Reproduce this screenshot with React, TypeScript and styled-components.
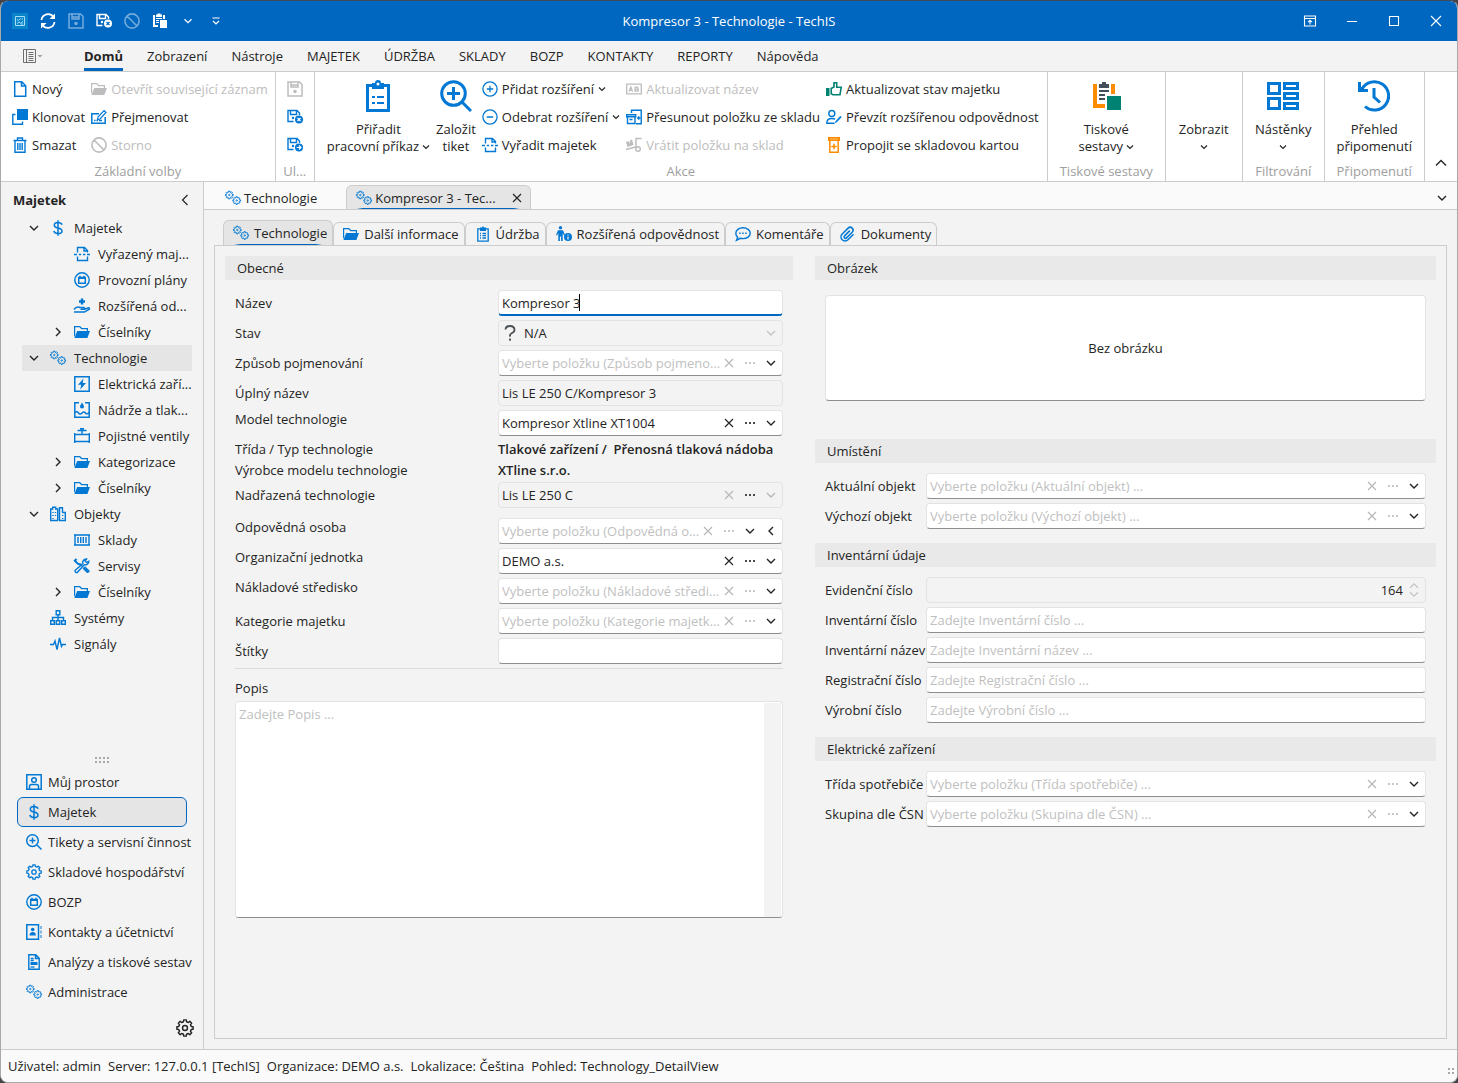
import React, { useId } from "react";
import styled, { createGlobalStyle, css } from "styled-components";

const BLUE = "#0078d4";
const ACCENT = "#0067c0";
const GRAY = "#bdbdbd";
const INK = "#242424";
const GREEN = "#008272";
const ORANGE = "#ff8c00";

const GlobalStyle = createGlobalStyle`
  *, *::before, *::after { box-sizing: border-box; }
  body { margin: 0; background: #45434a; }
  body, button, input, select, textarea {
    font-family: "Open Sans", "Noto Sans", sans-serif;
    font-size: 13px;
    line-height: 18px;
    color: ${INK};
  }
  button { border: 0; background: none; padding: 0; margin: 0; cursor: pointer; }
  input, select, textarea { margin: 0; padding: 0; }
`;

/* ---------- icons ---------- */

function gearPath(cx: number, cy: number, outer: number, inner: number, teeth: number) {
  const pts: string[] = [];
  for (let i = 0; i < teeth; i++) {
    const a = (i / teeth) * Math.PI * 2 - Math.PI / 2;
    const s = (Math.PI * 2) / teeth;
    [[-0.3, inner], [-0.2, outer], [0.2, outer], [0.3, inner]].forEach(([k, r]) => {
      pts.push(`${(cx + Math.cos(a + k * s) * r).toFixed(2)} ${(cy + Math.sin(a + k * s) * r).toFixed(2)}`);
    });
  }
  return `M${pts.join("L")}Z`;
}

const folder = (
  <g fill="currentColor" stroke="none">
    <path d="M0 2h6l2 2h6v3h-1.2V5.2H7.4l-2-2H1.2V11L0 13z" />
    <path d="M3.2 7H16l-2.6 7H.4z" />
  </g>
);
const floppy = (
  <path d="M1 1h11.5L15 3.500V15H1zM4 1v5h7V1M4 4h7" fill="none" strokeWidth="1.500" />
);
const floppySmall = (
  <path d="M6.500 12.500H1V1.500h9L12.500 4v2M3.500 1.500v4h6v-4" fill="none" strokeWidth="1.400" />
);
const boxFrame = <path d="M.8.8h14.400v14.400H.8z" strokeWidth="1.500" />;

const ICONS: Record<string, React.ReactNode> = {
  logo: (
    <>
      <path d="M0 0h16v16H0z" fill="#0a85c9" stroke="none" />
      <path d="M3.500 3.500h9v9h-9zM5 6.500l1.500 1L8.500 5.500M9.500 6H11M5 10.500l2-1.500 1.500 1.200L11 8.500M9 11h2" stroke="#a9dcf5" />
    </>
  ),
  refresh: (
    <>
      <path d="M1.500 7A6.600 6.600 0 0 1 13.500 4M14.500 9A6.600 6.600 0 0 1 2.500 12" strokeWidth="1.800" />
      <path d="M15 .5V6H9.500zM1 15.500V10h5.500z" fill="currentColor" stroke="none" />
    </>
  ),
  save: (
    <>
      {floppy}
      <circle cx="8" cy="10.500" r="1.800" fill="currentColor" stroke="none" />
    </>
  ),
  saveClose: (
    <>
      {floppySmall}
      <circle cx="12" cy="10.500" r="4" fill="currentColor" stroke="none" />
      <path d="M10.500 9l3 3M13.500 9l-3 3" stroke="var(--cut)" strokeWidth="1.200" />
      <circle cx="6" cy="9" r="1.200" fill="currentColor" stroke="none" />
    </>
  ),
  saveNew: (
    <>
      {floppySmall}
      <circle cx="12" cy="10.500" r="4" fill="currentColor" stroke="none" />
      <path d="M9.700 10.500h4M12 8.500l2 2-2 2" stroke="var(--cut)" strokeWidth="1.200" />
      <circle cx="6" cy="9" r="1.200" fill="currentColor" stroke="none" />
    </>
  ),
  ban: <path d="M8 .9a7.100 7.100 0 1 0 0 14.200A7.100 7.100 0 0 0 8 .9zM3 3l10 10" strokeWidth="1.600" />,
  paste: (
    <g fill="currentColor" stroke="none">
      <path d="M1 2h2v10h3v2H1zM11 2h2v4h-2zM4 1.500h1.500V.5h3v1H10V4H4zM4 5h6v1H4zM4 7h3v1H4zM4 9h3v1H4z" />
      <path d="M8 7h7v8H8z" />
    </g>
  ),
  customize: <path d="M4.500 5h7M5 8l3 3 3-3" strokeWidth="1.200" />,
  appMenu: (
    <>
      <path d="M.5 1.500h12v13H.5zM3.500 1.500v13M5.500 4.500h5M5.500 6.500h5M5.500 8.500h5M5.500 10.500h5M5.500 12.500h5" />
      <path d="M14.500 7h5L17 9.500z" fill="currentColor" stroke="none" opacity=".6" />
    </>
  ),
  newDoc: <path d="M2.700.8h7l4 4v10.400h-11zM9.500.8v4.200h4" strokeWidth="1.500" />,
  folder,
  clone: (
    <>
      <path d="M5 0h11v11H5z" fill="currentColor" stroke="none" />
      <path d="M3.500 5.500H.8v9.700h9.700v-2.700" strokeWidth="1.400" />
    </>
  ),
  rename: (
    <>
      <path d="M8 4.700H.8v9.500h13.400V8" strokeWidth="1.500" />
      <path d="M13 1.500l2 2-6 6.500-2.500.6.500-2.600z" strokeWidth="1.200" />
      <path d="M3 11.500h1.500M5.500 11.500H7M8 11.500h3" strokeWidth="1.300" />
    </>
  ),
  trash: <path d="M1.500 3.500h13M5.500 3V1h5v2M3 3.500v11.700h10V3.500M5.800 6v7M8 6v7M10.200 6v7" strokeWidth="1.400" />,
  plusCircle: <path d="M8 .9a7.100 7.100 0 1 0 0 14.200A7.100 7.100 0 0 0 8 .9zM8 4.800v6.400M4.800 8h6.400" strokeWidth="1.300" />,
  minusCircle: <path d="M8 .9a7.100 7.100 0 1 0 0 14.200A7.100 7.100 0 0 0 8 .9zM4.800 8h6.400" strokeWidth="1.300" />,
  retire: (
    <path d="M3.500 6.500v-5h7l3 3v2M10 1.500V5h3.500M3.500 10.500v4h10v-4M0 8.500h3M4.800 8.500h2.400M9 8.500h2.400M13 8.500h3" strokeWidth="1.400" />
  ),
  label: (
    <>
      <path d="M.7 3.200h14.600v9.600H.7z" strokeWidth="1.300" />
      <path d="M3 10.500L4.800 6l1.800 4.500M3.700 9.200h2.200M9 5.700v5M9 6.200h2q1.500 0 1 2H9M10.500 8.200q2.500 0 1.500 2H9" strokeWidth="1.300" />
    </>
  ),
  moveStock: (
    <>
      <path d="M5.500 4V1.200h9.700v13.600H10" strokeWidth="1.400" />
      <path d="M.7 5.700h9v2h-9zM1.500 8v6.500h7.500V8M3.500 10.500h3M11 9h3.500M12.700 7.200v3.600" strokeWidth="1.400" />
    </>
  ),
  returnStock: (
    <>
      <path d="M0 5l2.500-1 .8 1.800 1-.4-.7-1.900L6 2.500l1.500 5.500-6 2z" fill="currentColor" stroke="none" />
      <path d="M15.500 1.500H10v9M0 12.500l9.500-2.500" strokeWidth="1.500" />
      <circle cx="12" cy="12" r="2.300" strokeWidth="1.400" />
    </>
  ),
  thumb: (
    <>
      <path d="M0 7h3.500v8H0z" fill="currentColor" stroke="none" />
      <path d="M5.200 7.500L8 6V1.700h2.700v4.600h4.500L14 13.700H7l-1.800-1z" strokeWidth="1.600" />
    </>
  ),
  userEdit: (
    <>
      <circle cx="5.800" cy="4.500" r="3" strokeWidth="1.400" />
      <path d="M8.500 14.200H.8q0-4.700 5-4.700 2 0 3.400.7" strokeWidth="1.400" />
      <path d="M15.800 8L11 13l-2.500 1.500L9.700 12l4.500-5z" fill="currentColor" stroke="none" />
    </>
  ),
  stockCard: (
    <>
      <path d="M2 0h12v4H2z" fill="currentColor" stroke="none" />
      <path d="M3.800 4v11.200h8.400V4M8 6.800v5.400M5.300 9.500h5.400" strokeWidth="1.500" />
      <path d="M4 2h8" stroke="#ffc27a" />
    </>
  ),
  dollar: <path d="M8 .3v15.400M12 4.800Q11.200 2.600 8 2.600 4.300 2.600 4.300 5.200 4.300 7.200 8 7.900q4 .8 4 3 0 2.600-4 2.600-3.500 0-4.200-2.500" strokeWidth="1.500" />,
  plan: (
    <>
      <circle cx="8" cy="8" r="7.200" strokeWidth="1.400" />
      <path d="M4.700 5.500h6.600v5.700H4.700zM4.700 6.200h6.600M6 5.500V3.700M10 5.500V3.700" strokeWidth="1.500" />
    </>
  ),
  handPlus: (
    <>
      <path d="M8 .5v6M5 3.500h6" strokeWidth="2.400" />
      <path d="M0 11.500Q2.500 8 6 9.500h4q1.500 1 0 1.700H6.500M10 11.500l4.500-1.700q1.500.2.800 1.400L10.500 14H0" strokeWidth="1.400" />
    </>
  ),
  gears: (
    <>
      <path d={gearPath(4.300, 5, 3.900, 2.900, 8)} strokeWidth="1" />
      <circle cx="4.300" cy="5" r=".7" strokeWidth=".9" />
      <path d={gearPath(11.700, 10.500, 3.900, 2.900, 8)} strokeWidth="1" />
      <circle cx="11.700" cy="10.500" r=".7" strokeWidth=".9" />
    </>
  ),
  bolt: (
    <>
      {boxFrame}
      <path d="M9.500 2.500L4 8.800h3.200L6.300 13.500 12 7H8.700z" fill="currentColor" stroke="none" />
    </>
  ),
  tank: (
    <>
      <path d="M5 .8H.8v14.400h14.400V.8H11" strokeWidth="1.500" />
      <path d="M1 10.500q2-1.500 3.500.5t3.500 0 3.500 0T15 10.500" strokeWidth="1.400" />
      <path d="M8 .5l2 3.500q.2 2.500-2 2.600-2.200-.1-2-2.600z" fill="currentColor" stroke="none" />
    </>
  ),
  valve: <path d="M.7 5v10M15.300 5v10M.7 6.500h14.600M.7 13.500h14.600M8 6V1M3.500 2.500h9M6 .8h4" strokeWidth="1.400" />,
  buildings: (
    <path d="M.7 14.500V3h2V1.200h3V3h2v11.500zM3 6v1M5.500 6v1M3 9v1M5.500 9v1M3 12v1M9 14.500h6.300V6.500h-3M9.500 14V1.700h3v4.800M12.700 9v1M12.700 12v1" strokeWidth="1.400" />
  ),
  container: <path d="M0 3h16M0 13h16M1 3v10M15 3v10M4 5v6M6.700 5v6M9.300 5v6M12 5v6" strokeWidth="1.400" />,
  tools: (
    <>
      <path d="M2.500 1L.8 2.700l3 3 2.500.8L8 8" strokeWidth="2" />
      <path d="M9 10.500l4.500 4.500 2-2L11 8.700z" fill="currentColor" strokeWidth="1" />
      <path d="M14.800 3.200a3.600 3.600 0 0 1-4.600 3.500L3.200 14.500Q1 15 1 12.500L8.800 5.500A3.600 3.600 0 0 1 12.500 1L11 3l1.500 1.500z" strokeWidth="1.400" />
    </>
  ),
  sitemap: (
    <path d="M6.200.8h3.600v4H6.200zM.7 10.700h3.600v3.600H.7zM6.200 10.700h3.600v3.600H6.200zM11.700 10.700h3.600v3.600h-3.600zM8 5v5.500M2.500 10.500v-3h11v3" strokeWidth="1.400" />
  ),
  pulse: <path d="M0 8.500h3.500L5 5l2 8.500L9.500 2l2 8.500 1-2H16" strokeWidth="1.400" />,
  portrait: (
    <>
      {boxFrame}
      <circle cx="8" cy="6" r="2.300" strokeWidth="1.500" />
      <path d="M3.500 15v-2.500q0-2 2-2h5q2 0 2 2V15" strokeWidth="1.500" />
    </>
  ),
  zoomPlus: <path d="M6.500.8a5.800 5.800 0 1 0 0 11.600 5.800 5.800 0 0 0 0-11.600zM10.800 10.800l4.700 4.700M6.500 3.600v6M3.500 6.600h6" strokeWidth="1.500" />,
  gear: (
    <>
      <path d={gearPath(8, 8, 7.300, 5.700, 8)} strokeWidth="1.300" strokeLinejoin="round" />
      <circle cx="8" cy="8" r="2.200" strokeWidth="1.300" />
    </>
  ),
  contacts: (
    <>
      <path d="M.8.8h11.700v14.400H.8z" strokeWidth="1.500" />
      <circle cx="6.700" cy="5.500" r="1.800" fill="currentColor" stroke="none" />
      <path d="M3.500 11.500q0-3.500 3.200-3.500t3.200 3.500z" fill="currentColor" stroke="none" />
      <path d="M15 2v3M15 6.500v3M15 11v3" strokeWidth="1.600" opacity=".6" />
    </>
  ),
  report: (
    <>
      <path d="M2.800.8h7l3.400 3.400v11H2.800zM9.500.8v3.700h3.700M4.700 4.500h3M4.700 6.500h3" strokeWidth="1.400" />
      <path d="M4.500 8h7v3h-7z" fill="currentColor" stroke="none" />
      <path d="M4.500 13h4" strokeWidth="1.300" />
    </>
  ),
  clipboard: (
    <>
      <path d="M2.800 2.800h10.400v12.400H2.800zM5 7.500h1M7.500 7.500h3.500M5 9.700h1M7.500 9.700h3.500M5 12h1M7.500 12h3.500" strokeWidth="1.300" />
      <path d="M5 1.500h2L8 0l1 1.500h2V5H5z" fill="currentColor" stroke="none" />
    </>
  ),
  person: (
    <>
      <circle cx="4.500" cy="1.800" r="1.700" fill="currentColor" stroke="none" />
      <path d="M2 4.200h5L9 9l-1 .6L6.700 7v8H5.100v-4.500H3.900V15H2.300V7L1 9.600 0 9z" fill="currentColor" stroke="none" />
      <circle cx="12" cy="11" r="4" fill="currentColor" stroke="none" />
      <path d="M12 8.500v1M12 10.500v3" stroke="#f3f3f3" strokeWidth="1.200" />
    </>
  ),
  comment: (
    <>
      <path d="M8 1.800c4 0 7.200 2.300 7.200 5.400s-3.200 5.400-7.200 5.400q-1.500 0-2.700-.3L1.500 14.200l1.200-3Q.8 9.500.8 7.200C.8 4.100 4 1.800 8 1.800z" strokeWidth="1.400" />
      <path d="M4.200 6.500h1.500v1.500H4.200zM7.200 6.500h1.500v1.500H7.200zM10.200 6.500h1.500v1.500h-1.500z" fill="currentColor" stroke="none" />
    </>
  ),
  clip: (
    <path d="M10.600 4.600L5.300 9.900a1.400 1.400 0 0 0 2 2L13 6.200a2.900 2.900 0 0 0-4.100-4.100L3 8a4.100 4.100 0 0 0 5.800 5.800L14.300 8.300" strokeWidth="1.500" transform="translate(-.8 0)" />
  ),
  question: <path d="M3.500 4.500Q3.700 1 8 1t4.500 3.800Q12.500 7 10 8t-2 3.700M8 13.500v2.300" strokeWidth="1.800" />,
  close: <path d="M4 4l8 8M12 4l-8 8" strokeWidth="1.200" />,
  dots: <path d="M3 8h2M7 8h2M11 8h2" strokeWidth="2" />,
  down: <path d="M4 6l4 4 4-4" strokeWidth="1.400" />,
  up: <path d="M3 10.500l5-5 5 5" strokeWidth="1.400" />,
  spinUp: <path d="M3.500 10L8 5.500l4.500 4.500" strokeWidth="1.400" />,
  spinDown: <path d="M3.500 6L8 10.500 12.500 6" strokeWidth="1.400" />,
  left: <path d="M10 4L6 8l4 4" strokeWidth="1.400" />,
  leftWide: <path d="M10.500 3l-5 5 5 5" strokeWidth="1.200" />,
  right: <path d="M6 4l4 4-4 4" strokeWidth="1.400" />,
  ribbonMode: <path d="M2.500 3h11v10h-11zM2.500 5.500h11M8 11.500V7.500M6 9.200l2-2 2 2" strokeWidth="1.100" />,
  minimize: <path d="M3 8.500h10" strokeWidth="1.100" />,
  maximize: <path d="M3.500 3.500h9v9h-9z" strokeWidth="1.100" />,
  quit: <path d="M3 3l10 10M13 3L3 13" strokeWidth="1.100" />,
};

const BIG: Record<string, React.ReactNode> = {
  clipboard: (
    <>
      <path d="M5.500 5.500h21v25h-21z" strokeWidth="3" />
      <path d="M10 3h3q0-3 3-3t3 3h3v6H10z" fill="currentColor" stroke="none" />
      <circle cx="16" cy="4" r="1.500" fill="#fff" stroke="none" />
      <path d="M10 17h3M15 17h7M10 23h3M15 23h7" strokeWidth="2" />
    </>
  ),
  zoom: <path d="M13.500 1.700a11.800 11.800 0 1 0 0 23.600 11.800 11.800 0 0 0 0-23.600zM22 22l9 9M13.500 7v13M7 13.500h13" strokeWidth="3" />,
  report: (
    <g stroke="none">
      <path d="M3 4h4v20h8v4H3zM21 4h4v10h-4z" fill={ORANGE} />
      <path d="M9 4h3V2h4v2h3v4H9zM9 10h10v2H9zM9 14h6v2H9zM9 18h6v2H9z" fill="#42505a" />
      <path d="M17 16h14v14H17z" fill={GREEN} />
    </g>
  ),
  boards: (
    <path d="M1.500 3.500h11v10h-11zM1.500 18.500h11v10h-11zM17.500 3.500h13v5h-13zM17.500 13.500h13v5h-13zM17.500 23.500h13v5h-13z" strokeWidth="3" />
  ),
  history: (
    <>
      <path d="M7 26.500A14.200 14.200 0 1 0 4 9" strokeWidth="3" />
      <path d="M1.500 2v8.500H10M16 8v9l6 5.500" strokeWidth="3" />
      <path d="M1.500 10.500L8 4" strokeWidth="2" />
    </>
  ),
};

const Svg = styled.svg<{ $tone?: string }>`
  flex: none;
  display: block;
  color: ${(p) => p.$tone || BLUE};
`;

function Icon({ name, tone, size = 16, cut = "#fff" }: { name: string; tone?: string; size?: number; cut?: string }) {
  return (
    <Svg $tone={tone} width={size} height={size} viewBox="0 0 16 16" fill="none" stroke="currentColor" overflow="visible"
      style={{ "--cut": cut } as React.CSSProperties} aria-hidden="true">
      {ICONS[name]}
    </Svg>
  );
}

function BigIcon({ name }: { name: string }) {
  return (
    <Svg width="32" height="32" viewBox="0 0 32 32" fill="none" stroke="currentColor" aria-hidden="true">
      {BIG[name]}
    </Svg>
  );
}

const Chevron = () => (
  <Svg $tone={INK} width="8" height="6" viewBox="0 0 8 6" fill="none" stroke="currentColor" aria-hidden="true">
    <path d="M1 1.500l3 3 3-3" strokeWidth="1.200" />
  </Svg>
);

/* ---------- window frame ---------- */

const Window = styled.div`
  min-height: 100vh;
  display: flex;
  flex-direction: column;
  background: #f3f3f3;
  border: 1px solid #a9a9a9;
  border-top-color: #3f4a5a;
  border-radius: 8px;
  overflow: hidden;
`;

const TitleBar = styled.header`
  height: 40px;
  flex: none;
  display: grid;
  grid-template-columns: 1fr auto 1fr;
  align-items: center;
  background: ${ACCENT};
`;

const QuickAccess = styled.div`
  display: flex;
  align-items: center;
  padding-left: 5px;
`;

const QuickButton = styled.button<{ $dim?: boolean }>`
  width: 28px;
  height: 28px;
  display: grid;
  place-items: center;
  opacity: ${(p) => (p.$dim ? 0.45 : 1)};
`;

const WindowTitle = styled.h1`
  margin: 0;
  font-size: 13px;
  font-weight: 400;
  color: #fff;
`;

const WindowButtons = styled.div`
  display: flex;
  justify-content: flex-end;
`;

const WindowButton = styled.button`
  width: 42px;
  height: 40px;
  display: grid;
  place-items: center;
`;

const MenuBar = styled.nav`
  height: 31px;
  flex: none;
  display: flex;
  padding-left: 22px;
  border-bottom: 1px solid #cccccc;
`;

const AppMenuButton = styled.button`
  width: 49px;
  display: flex;
  align-items: center;
`;

const MenuTab = styled.button<{ $active?: boolean }>`
  padding: 0 12px;
  font-weight: ${(p) => (p.$active ? 700 : 400)};
  span {
    display: block;
    line-height: 24px;
    padding: 3px 0 0;
    border-bottom: 3px solid ${(p) => (p.$active ? ACCENT : "transparent")};
  }
`;

/* ---------- ribbon ---------- */

const Ribbon = styled.section`
  height: 110px;
  flex: none;
  display: flex;
  background: #fff;
  border-bottom: 1px solid #cccccc;
`;

const Group = styled.div<{ $min?: number }>`
  display: flex;
  flex-direction: column;
  flex: none;
  min-width: ${(p) => p.$min || 0}px;
  border-right: 1px solid #cccccc;
`;

const GroupBody = styled.div<{ $tight?: boolean }>`
  flex: 1;
  display: flex;
  justify-content: center;
  gap: ${(p) => (p.$tight ? 6 : 8)}px;
  padding: ${(p) => (p.$tight ? "3px 7px 0 11px" : "3px 11px 0")};
`;

const GroupCaption = styled.div`
  height: 21px;
  line-height: 22px;
  text-align: center;
  color: #9e9e9e;
`;

const RibbonColumn = styled.div`
  display: flex;
  flex-direction: column;
  align-items: flex-start;
`;

const SmallButton = styled.button`
  height: 28px;
  display: flex;
  align-items: center;
  gap: 4px;
  white-space: nowrap;
  &:disabled { color: ${GRAY}; cursor: default; }
`;

const BigButton = styled.button`
  display: flex;
  flex-direction: column;
  align-items: center;
  padding-top: 5px;
`;

const BigLabel = styled.span<{ $bare?: boolean }>`
  display: flex;
  flex-direction: column;
  align-items: center;
  margin-top: ${(p) => (p.$bare ? 41 : 9)}px;
  line-height: 17px;
  white-space: nowrap;
`;

const BigLine = styled.span`
  min-height: 17px;
  display: flex;
  align-items: center;
  gap: 3px;
`;

const RibbonEnd = styled.div`
  flex: 1;
  display: flex;
  justify-content: flex-end;
  align-items: flex-end;
  padding: 0 8px 10px;
`;

type Cmd = { icon: string; text: string; tone?: string; off?: boolean; drop?: boolean };

function CommandColumn({ items }: { items: Cmd[] }) {
  return (
    <RibbonColumn>
      {items.map((c) => (
        <SmallButton key={c.text} disabled={c.off}>
          <Icon name={c.icon} tone={c.off ? GRAY : c.tone} />
          {c.text}
          {c.drop && <Chevron />}
        </SmallButton>
      ))}
    </RibbonColumn>
  );
}

function BigCommand({ icon, lines, drop }: { icon?: string; lines: string[]; drop?: boolean }) {
  return (
    <BigButton>
      {icon && <BigIcon name={icon} />}
      <BigLabel $bare={!icon}>
        {lines.map((l, i) => (
          <BigLine key={i}>
            {l}
            {drop && i === lines.length - 1 && <Chevron />}
          </BigLine>
        ))}
      </BigLabel>
    </BigButton>
  );
}

/* ---------- sidebar ---------- */

const Body = styled.div`
  flex: 1;
  display: flex;
  min-height: 0;
`;

const Sidebar = styled.aside`
  width: 203px;
  flex: none;
  display: flex;
  flex-direction: column;
  border-right: 1px solid #cccccc;
`;

const SideTitle = styled.div`
  height: 33px;
  display: flex;
  align-items: center;
  justify-content: space-between;
  padding: 3px 10px 0 12px;
  font-weight: 700;
`;

const Tree = styled.ul`
  list-style: none;
  margin: 0 11px 0 21px;
  padding: 0;
  flex: 1;
`;

const TreeRow = styled.li<{ $level: number; $active?: boolean }>`
  height: 26px;
  display: flex;
  align-items: center;
  padding-left: ${(p) => 4 + p.$level * 24}px;
  background: ${(p) => (p.$active ? "#e5e5e5" : "transparent")};
  white-space: nowrap;
`;

const TreeToggle = styled.button`
  width: 24px;
  height: 16px;
  flex: none;
`;

const TreeSpacer = styled.span`
  width: 24px;
  flex: none;
`;

const TreeLink = styled.a`
  display: flex;
  align-items: center;
  gap: 8px;
  color: inherit;
  text-decoration: none;
`;

const Grip = styled.div<{ $cols: number }>`
  display: grid;
  grid-template-columns: repeat(${(p) => p.$cols}, 2px);
  gap: 2px;
  justify-content: center;
  i { width: 2px; height: 2px; background: #a8a8a8; }
`;

const SideNav = styled.nav`
  display: flex;
  flex-direction: column;
  padding: 4px 16px 0;
`;

const SideNavItem = styled.a<{ $active?: boolean }>`
  height: 30px;
  display: flex;
  align-items: center;
  gap: 6px;
  padding: 0 1px 0 8px;
  border: 1px solid ${(p) => (p.$active ? ACCENT : "transparent")};
  border-radius: 6px;
  background: ${(p) => (p.$active ? "#e5e5e5" : "transparent")};
  color: inherit;
  text-decoration: none;
  white-space: nowrap;
`;

const SideFoot = styled.div`
  height: 42px;
  display: flex;
  align-items: center;
  justify-content: flex-end;
  padding-right: 9px;
`;

/* ---------- document area ---------- */

const Main = styled.main`
  flex: 1;
  min-width: 0;
  display: flex;
  flex-direction: column;
`;

const DocTabs = styled.div`
  height: 28px;
  flex: none;
  display: flex;
  align-items: flex-end;
  justify-content: space-between;
  padding: 0 5px 0 11px;
  background: #fafafa;
  border-bottom: 1px solid #cccccc;
`;

const DocTabList = styled.div`
  display: flex;
  gap: 23px;
`;

const underline = css`
  background-image: linear-gradient(to right, transparent 10px, ${ACCENT} 16px, ${ACCENT} calc(100% - 16px), transparent calc(100% - 10px));
  background-size: 100% 1px;
  background-position: bottom;
  background-repeat: no-repeat;
`;

const DocTab = styled.div<{ $active?: boolean }>`
  height: 24px;
  display: flex;
  align-items: center;
  gap: 3px;
  padding: 0 5px 0 9px;
  border: 1px solid transparent;
  border-bottom: 0;
  border-radius: 6px 6px 0 0;
  ${(p) => p.$active && css`
    background-color: #e5e5e5;
    border-color: #cccccc;
    ${underline}
  `}
  button:last-child:not(:first-child) { margin-left: 10px; }
`;

const TabText = styled.button`
  display: flex;
  align-items: center;
  gap: 3px;
  white-space: nowrap;
`;

const Content = styled.div`
  flex: 1;
  display: flex;
  flex-direction: column;
  padding: 10px;
`;

const PageTabs = styled.div`
  display: flex;
  align-items: flex-end;
  height: 25px;
  padding-left: 9px;
`;

const PageTab = styled.button<{ $active?: boolean }>`
  height: ${(p) => (p.$active ? 25 : 23)}px;
  display: flex;
  align-items: center;
  gap: 5px;
  padding: 0 5px 0 9px;
  border: 1px solid #cccccc;
  border-bottom: 0;
  border-radius: 6px 6px 0 0;
  white-space: nowrap;
  ${(p) => p.$active && css`
    background-color: #e5e5e5;
    ${underline}
  `}
`;

const Panel = styled.div`
  flex: 1;
  display: grid;
  grid-template-columns: 568fr 621fr;
  gap: 22px;
  align-items: start;
  padding: 10px;
  border: 1px solid #cccccc;
`;

const Column = styled.div`
  min-width: 0;
`;

const SectionTitle = styled.h2`
  margin: 0;
  padding: 3px 12px;
  font-size: 13px;
  font-weight: 400;
  background: #e9e9e9;
`;

const Rows = styled.div<{ $label: number }>`
  --label: ${(p) => p.$label}px;
  display: flex;
  flex-direction: column;
  gap: 4px;
  padding: 10px 10px 14px;
`;

const Row = styled.div<{ $top?: boolean }>`
  display: grid;
  grid-template-columns: var(--label) minmax(0, 1fr);
  align-items: ${(p) => (p.$top ? "start" : "center")};
  label { white-space: nowrap; }
`;

const Facts = styled.dl`
  margin: -1px 0 -3px;
  display: grid;
  grid-template-columns: var(--label) minmax(0, 1fr);
  line-height: 21px;
  dt, dd { margin: 0; white-space: nowrap; }
  dd { font-weight: 600; }
`;

const Break = styled.div`
  height: 2px;
`;

const Rule = styled.hr`
  width: 100%;
  margin: 0;
  border: 0;
  border-top: 1px solid #dcdcdc;
`;

const Box = styled.div<{ $readonly?: boolean; $focus?: boolean }>`
  position: relative;
  height: 26px;
  display: flex;
  align-items: center;
  padding: 0 1px 0 3px;
  background: ${(p) => (p.$readonly ? "#f3f3f3" : "#fff")};
  border: 1px solid #e3e3e3;
  border-bottom: ${(p) => (p.$focus ? `2px solid ${ACCENT}` : p.$readonly ? "1px solid #e3e3e3" : "1px solid #8e8e8e")};
  border-radius: 4px;
`;

const Input = styled.input`
  flex: 1;
  min-width: 0;
  width: 100%;
  height: 22px;
  border: 0;
  outline: 0;
  background: transparent;
  text-overflow: ellipsis;
  text-align: ${(p) => (p.type === "number" ? "right" : "left")};
  appearance: textfield;
  &::placeholder { color: #bfbfbf; opacity: 1; }
  &::-webkit-inner-spin-button { appearance: none; }
`;

const PickInput = styled(Input)`
  margin-right: -5px;
`;

const Caret = styled.span`
  position: absolute;
  left: 80px;
  top: 3px;
  width: 1px;
  height: 17px;
  background: #000;
`;

const Select = styled.select`
  flex: 1;
  appearance: none;
  border: 0;
  margin-left: 6px;
  background: transparent;
  color: ${INK};
  opacity: 1;
`;

const FieldButton = styled.button`
  width: 21px;
  height: 22px;
  flex: none;
  display: grid;
  place-items: center;
`;

const Spin = styled.div`
  width: 21px;
  display: flex;
  flex-direction: column;
  align-items: center;
`;

const SpinButton = styled.button`
  height: 8px;
  display: flex;
  align-items: center;
`;

const Notes = styled.div`
  display: flex;
  height: 217px;
  background: #fff;
  border: 1px solid #e3e3e3;
  border-bottom-color: #8e8e8e;
  border-radius: 4px;
  overflow: hidden;
  padding-right: 1px;
`;

const TextArea = styled.textarea`
  flex: 1;
  border: 0;
  outline: 0;
  resize: none;
  padding: 3px;
  &::placeholder { color: #bfbfbf; opacity: 1; }
`;

const ScrollTrack = styled.div`
  width: 17px;
  margin-top: 1px;
  background: #f3f3f3;
`;

const NotesLabel = styled.label`
  margin: 6px 0 0;
`;

const ImageBox = styled.div`
  height: 106px;
  margin: 5px 0 24px;
  display: grid;
  place-items: center;
  background: #fff;
  border: 1px solid #e3e3e3;
  border-bottom-color: #8e8e8e;
  border-radius: 4px;
`;

const StatusBar = styled.footer`
  height: 33px;
  flex: none;
  display: flex;
  align-items: center;
  gap: 7px;
  padding: 0 3px 0 7px;
  background: #fafafa;
  border-top: 1px solid #cccccc;
  div { margin: 10px 0 0 auto; }
`;

function TextField({ label, value, hint, readOnly, focus }: { label: string; value?: string; hint?: string; readOnly?: boolean; focus?: boolean }) {
  const id = useId();
  return (
    <Row>
      <label htmlFor={id}>{label}</label>
      <Box $readonly={readOnly} $focus={focus}>
        <Input id={id} defaultValue={value} placeholder={hint} readOnly={readOnly} />
        {focus && <Caret />}
      </Box>
    </Row>
  );
}

function PickField({ label, value, hint, readOnly, top, extra }: { label: string; value?: string; hint?: string; readOnly?: boolean; top?: boolean; extra?: boolean }) {
  const id = useId();
  const pale = "#b8b8b8";
  return (
    <Row $top={top}>
      <label htmlFor={id}>{label}</label>
      <Box $readonly={readOnly}>
        <PickInput id={id} defaultValue={value} placeholder={hint} readOnly={readOnly} />
        <FieldButton aria-label="Vymazat"><Icon name="close" tone={value && !readOnly ? INK : pale} /></FieldButton>
        <FieldButton aria-label="Vybrat"><Icon name="dots" tone={value ? "#4a4a4a" : "#c8c8c8"} /></FieldButton>
        <FieldButton aria-label="Rozbalit"><Icon name="down" tone={readOnly ? pale : INK} /></FieldButton>
        {extra && <FieldButton aria-label="Více"><Icon name="left" tone={INK} /></FieldButton>}
      </Box>
    </Row>
  );
}

const MENU = ["Domů", "Zobrazení", "Nástroje", "MAJETEK", "ÚDRŽBA", "SKLADY", "BOZP", "KONTAKTY", "REPORTY", "Nápověda"];

const TREE: { text: string; icon: string; level: number; toggle?: "down" | "right"; active?: boolean }[] = [
  { text: "Majetek", icon: "dollar", level: 0, toggle: "down" },
  { text: "Vyřazený maj...", icon: "retire", level: 1 },
  { text: "Provozní plány", icon: "plan", level: 1 },
  { text: "Rozšířená od...", icon: "handPlus", level: 1 },
  { text: "Číselníky", icon: "folder", level: 1, toggle: "right" },
  { text: "Technologie", icon: "gears", level: 0, toggle: "down", active: true },
  { text: "Elektrická zaří...", icon: "bolt", level: 1 },
  { text: "Nádrže a tlak...", icon: "tank", level: 1 },
  { text: "Pojistné ventily", icon: "valve", level: 1 },
  { text: "Kategorizace", icon: "folder", level: 1, toggle: "right" },
  { text: "Číselníky", icon: "folder", level: 1, toggle: "right" },
  { text: "Objekty", icon: "buildings", level: 0, toggle: "down" },
  { text: "Sklady", icon: "container", level: 1 },
  { text: "Servisy", icon: "tools", level: 1 },
  { text: "Číselníky", icon: "folder", level: 1, toggle: "right" },
  { text: "Systémy", icon: "sitemap", level: 0 },
  { text: "Signály", icon: "pulse", level: 0 },
];

const NAV = [
  ["Můj prostor", "portrait"],
  ["Majetek", "dollar"],
  ["Tikety a servisní činnost", "zoomPlus"],
  ["Skladové hospodářství", "gear"],
  ["BOZP", "plan"],
  ["Kontakty a účetnictví", "contacts"],
  ["Analýzy a tiskové sestav", "report"],
  ["Administrace", "gears"],
];

const PAGE_TABS = [
  ["Technologie", "gears"],
  ["Další informace", "folder"],
  ["Údržba", "clipboard"],
  ["Rozšířená odpovědnost", "person"],
  ["Komentáře", "comment"],
  ["Dokumenty", "clip"],
];

const QUICK: [string, string, boolean][] = [
  ["refresh", "Obnovit", false],
  ["save", "Uložit", true],
  ["saveClose", "Uložit a zavřít", false],
  ["ban", "Storno", true],
  ["paste", "Sestavy", false],
];

export default function App() {
  const stateId = useId();
  const numberId = useId();
  const notesId = useId();
  return (
    <>
      <GlobalStyle />
      <Window>
        <TitleBar>
          <QuickAccess>
            <QuickButton aria-label="TechIS"><Icon name="logo" /></QuickButton>
            {QUICK.map(([icon, name, dim]) => (
              <QuickButton key={icon} aria-label={name} $dim={dim}><Icon name={icon} tone="#fff" cut={ACCENT} /></QuickButton>
            ))}
            <QuickButton aria-label="Další"><Icon name="down" tone="#fff" size={14} /></QuickButton>
            <QuickButton aria-label="Přizpůsobit"><Icon name="customize" tone="#fff" /></QuickButton>
          </QuickAccess>
          <WindowTitle>Kompresor 3 - Technologie - TechIS</WindowTitle>
          <WindowButtons>
            {[["ribbonMode", "Pás karet"], ["minimize", "Minimalizovat"], ["maximize", "Maximalizovat"], ["quit", "Zavřít"]].map(([icon, name]) => (
              <WindowButton key={icon} aria-label={name}><Icon name={icon} tone="#fff" /></WindowButton>
            ))}
          </WindowButtons>
        </TitleBar>

        <MenuBar>
          <AppMenuButton aria-label="Nabídka"><Icon name="appMenu" tone="#6e6e6e" /></AppMenuButton>
          {MENU.map((m, i) => (
            <MenuTab key={m} $active={i === 0}><span>{m}</span></MenuTab>
          ))}
        </MenuBar>

        <Ribbon>
          <Group>
            <GroupBody $tight>
              <CommandColumn items={[{ icon: "newDoc", text: "Nový" }, { icon: "clone", text: "Klonovat" }, { icon: "trash", text: "Smazat" }]} />
              <CommandColumn items={[{ icon: "folder", text: "Otevřít související záznam", off: true }, { icon: "rename", text: "Přejmenovat" }, { icon: "ban", text: "Storno", off: true }]} />
            </GroupBody>
            <GroupCaption>Základní volby</GroupCaption>
          </Group>
          <Group>
            <GroupBody>
              <RibbonColumn>
                <SmallButton disabled aria-label="Uložit"><Icon name="save" tone={GRAY} /></SmallButton>
                <SmallButton aria-label="Uložit a zavřít"><Icon name="saveClose" /></SmallButton>
                <SmallButton aria-label="Uložit a nový"><Icon name="saveNew" /></SmallButton>
              </RibbonColumn>
            </GroupBody>
            <GroupCaption>Ul...</GroupCaption>
          </Group>
          <Group $min={733}>
            <GroupBody $tight>
              <BigCommand icon="clipboard" lines={["Přiřadit", "pracovní příkaz"]} drop />
              <BigCommand icon="zoom" lines={["Založit", "tiket"]} />
              <CommandColumn items={[{ icon: "plusCircle", text: "Přidat rozšíření", drop: true }, { icon: "minusCircle", text: "Odebrat rozšíření", drop: true }, { icon: "retire", text: "Vyřadit majetek" }]} />
              <CommandColumn items={[{ icon: "label", text: "Aktualizovat název", off: true }, { icon: "moveStock", text: "Přesunout položku ze skladu" }, { icon: "returnStock", text: "Vrátit položku na sklad", off: true }]} />
              <CommandColumn items={[{ icon: "thumb", text: "Aktualizovat stav majetku", tone: GREEN }, { icon: "userEdit", text: "Převzít rozšířenou odpovědnost" }, { icon: "stockCard", text: "Propojit se skladovou kartou", tone: ORANGE }]} />
            </GroupBody>
            <GroupCaption>Akce</GroupCaption>
          </Group>
          <Group $min={118}>
            <GroupBody><BigCommand icon="report" lines={["Tiskové", "sestavy"]} drop /></GroupBody>
            <GroupCaption>Tiskové sestavy</GroupCaption>
          </Group>
          <Group $min={77}>
            <GroupBody><BigCommand lines={["Zobrazit", ""]} drop /></GroupBody>
            <GroupCaption />
          </Group>
          <Group $min={82}>
            <GroupBody><BigCommand icon="boards" lines={["Nástěnky", ""]} drop /></GroupBody>
            <GroupCaption>Filtrování</GroupCaption>
          </Group>
          <Group $min={100}>
            <GroupBody><BigCommand icon="history" lines={["Přehled", "připomenutí"]} /></GroupBody>
            <GroupCaption>Připomenutí</GroupCaption>
          </Group>
          <RibbonEnd>
            <button aria-label="Sbalit pás karet"><Icon name="up" tone={INK} /></button>
          </RibbonEnd>
        </Ribbon>

        <Body>
          <Sidebar>
            <SideTitle>
              Majetek
              <button aria-label="Sbalit panel"><Icon name="leftWide" tone={INK} /></button>
            </SideTitle>
            <Tree>
              {TREE.map((t, i) => (
                <TreeRow key={i} $level={t.level} $active={t.active}>
                  {t.toggle ? (
                    <TreeToggle aria-label="Rozbalit"><Icon name={t.toggle} tone={INK} /></TreeToggle>
                  ) : (
                    <TreeSpacer />
                  )}
                  <TreeLink href="#"><Icon name={t.icon} cut="#f3f3f3" />{t.text}</TreeLink>
                </TreeRow>
              ))}
            </Tree>
            <Grip $cols={4}>{Array.from({ length: 8 }, (_, i) => <i key={i} />)}</Grip>
            <SideNav>
              {NAV.map(([text, icon], i) => (
                <SideNavItem key={text} href="#" $active={i === 1}><Icon name={icon} /><span>{text}</span></SideNavItem>
              ))}
            </SideNav>
            <SideFoot>
              <button aria-label="Nastavení"><Icon name="gear" tone={INK} size={18} /></button>
            </SideFoot>
          </Sidebar>

          <Main>
            <DocTabs>
              <DocTabList>
                <DocTab>
                  <TabText><Icon name="gears" />Technologie</TabText>
                </DocTab>
                <DocTab $active>
                  <TabText><Icon name="gears" />Kompresor 3 - Tec...</TabText>
                  <button aria-label="Zavřít kartu"><Icon name="close" tone={INK} /></button>
                </DocTab>
              </DocTabList>
              <FieldButton aria-label="Seznam karet"><Icon name="down" tone={INK} /></FieldButton>
            </DocTabs>

            <Content>
              <PageTabs>
                {PAGE_TABS.map(([text, icon], i) => (
                  <PageTab key={text} $active={i === 0}><Icon name={icon} />{text}</PageTab>
                ))}
              </PageTabs>
              <Panel>
                <Column>
                  <SectionTitle>Obecné</SectionTitle>
                  <Rows $label={263}>
                    <TextField label="Název" value="Kompresor 3" focus />
                    <Row>
                      <label htmlFor={stateId}>Stav</label>
                      <Box $readonly>
                        <Icon name="question" tone="#4b4f54" />
                        <Select id={stateId} disabled defaultValue="na"><option value="na">N/A</option></Select>
                        <FieldButton aria-label="Rozbalit" disabled><Icon name="down" tone="#c4c4c4" /></FieldButton>
                      </Box>
                    </Row>
                    <PickField label="Způsob pojmenování" hint="Vyberte položku (Způsob pojmenování) ..." />
                    <TextField label="Úplný název" value="Lis LE 250 C/Kompresor 3" readOnly />
                    <PickField label="Model technologie" value="Kompresor Xtline XT1004" top />
                    <Facts>
                      <dt>Třída / Typ technologie</dt>
                      <dd>Tlakové zařízení /&nbsp; Přenosná tlaková nádoba</dd>
                      <dt>Výrobce modelu technologie</dt>
                      <dd>XTline s.r.o.</dd>
                    </Facts>
                    <PickField label="Nadřazená technologie" value="Lis LE 250 C" readOnly />
                    <Break />
                    <PickField label="Odpovědná osoba" hint="Vyberte položku (Odpovědná osoba) ..." top extra />
                    <PickField label="Organizační jednotka" value="DEMO a.s." top />
                    <PickField label="Nákladové středisko" hint="Vyberte položku (Nákladové středisko) ..." top />
                    <PickField label="Kategorie majetku" hint="Vyberte položku (Kategorie majetku) ..." />
                    <TextField label="Štítky" />
                    <Rule />
                    <NotesLabel htmlFor={notesId}>Popis</NotesLabel>
                    <Notes>
                      <TextArea id={notesId} placeholder="Zadejte Popis ..." />
                      <ScrollTrack />
                    </Notes>
                  </Rows>
                </Column>

                <Column>
                  <SectionTitle>Obrázek</SectionTitle>
                  <Rows $label={101}>
                    <ImageBox>Bez obrázku</ImageBox>
                  </Rows>
                  <SectionTitle>Umístění</SectionTitle>
                  <Rows $label={101}>
                    <PickField label="Aktuální objekt" hint="Vyberte položku (Aktuální objekt) ..." />
                    <PickField label="Výchozí objekt" hint="Vyberte položku (Výchozí objekt) ..." />
                  </Rows>
                  <SectionTitle>Inventární údaje</SectionTitle>
                  <Rows $label={101}>
                    <Row>
                      <label htmlFor={numberId}>Evidenční číslo</label>
                      <Box $readonly>
                        <Input id={numberId} type="number" defaultValue={164} readOnly />
                        <Spin>
                          <SpinButton aria-label="Zvýšit"><Icon name="spinUp" tone="#c4c4c4" size={14} /></SpinButton>
                          <SpinButton aria-label="Snížit"><Icon name="spinDown" tone="#c4c4c4" size={14} /></SpinButton>
                        </Spin>
                      </Box>
                    </Row>
                    <TextField label="Inventární číslo" hint="Zadejte Inventární číslo ..." />
                    <TextField label="Inventární název" hint="Zadejte Inventární název ..." />
                    <TextField label="Registrační číslo" hint="Zadejte Registrační číslo ..." />
                    <TextField label="Výrobní číslo" hint="Zadejte Výrobní číslo ..." />
                  </Rows>
                  <SectionTitle>Elektrické zařízení</SectionTitle>
                  <Rows $label={101}>
                    <PickField label="Třída spotřebiče" hint="Vyberte položku (Třída spotřebiče) ..." />
                    <PickField label="Skupina dle ČSN" hint="Vyberte položku (Skupina dle ČSN) ..." />
                  </Rows>
                </Column>
              </Panel>
            </Content>
          </Main>
        </Body>

        <StatusBar>
          <span>Uživatel: admin</span>
          <span>Server: 127.0.0.1 [TechIS]</span>
          <span>Organizace: DEMO a.s.</span>
          <span>Lokalizace: Čeština</span>
          <span>Pohled: Technology_DetailView</span>
          <Grip as="div" $cols={2}>{Array.from({ length: 4 }, (_, i) => <i key={i} />)}</Grip>
        </StatusBar>
      </Window>
    </>
  );
}
